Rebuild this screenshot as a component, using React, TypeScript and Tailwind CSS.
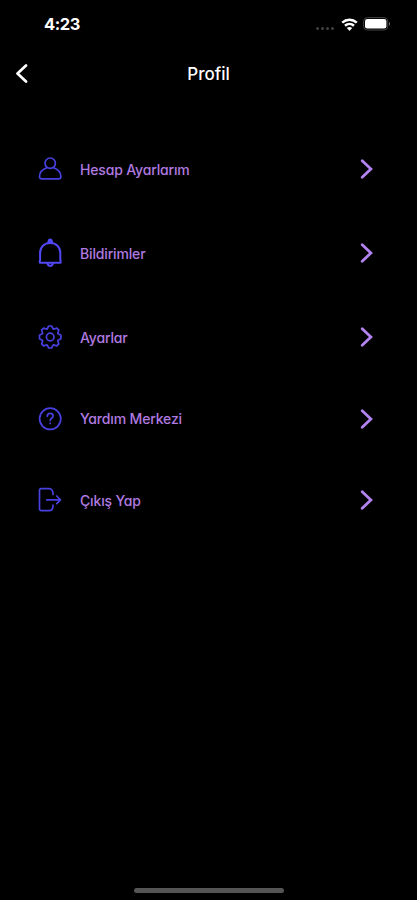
import type { ReactNode } from "react";

const stroke = { fill: "none", stroke: "currentColor", strokeWidth: 1.7, strokeLinecap: "round", strokeLinejoin: "round" } as const;

function Icon({ children }: { children: ReactNode }) {
  return (
    <svg width="24" height="32" viewBox="0 0 24 32" className="shrink-0 text-[#4840df]" {...stroke}>
      {children}
    </svg>
  );
}

const UserIcon = () => (
  <Icon>
    <circle cx="12.2" cy="10.2" r="5.2" />
    <path d="M8.8 14.8C4.6 16.4 1.5 19.7 1.5 23.5c0 1.7.8 2.4 2.5 2.4h16.4c1.7 0 2.5-.7 2.5-2.4 0-3.8-3.1-7.1-7.3-8.7" />
  </Icon>
);

const BellIcon = () => (
  <Icon>
    <g stroke="#5148f4" strokeWidth="2">
      <path d="M10.3 5.5c.2-1.2.2-3 1.9-3s1.7 1.8 1.9 3Z" fill="#5148f4" />
      <path d="M2.1 16C2.1 10 6.2 6 12.2 6s10.1 4 10.1 10v6.8l.4 2c.1.6-.2 1-.8 1H2.5c-.6 0-.9-.4-.8-1l.4-2Z" />
      <path d="M9.4 26.4c.5 1.6 1.4 2.5 2.8 2.5s2.3-.9 2.8-2.5" />
    </g>
  </Icon>
);

const GearIcon = () => (
  <Icon>
    <path d="m10.3 5.6.5-.6h2.8l1.7 3.2 3.5-1.1 2 2-1.1 3.5 3.2 1.7v3.4l-3.2 1.7 1.1 3.5-2 2-3.5-1.1-1.7 3.2h-2.8l-1.7-3.2-3.5 1.1-2-2 1.1-3.5-3.2-1.7v-3.4l3.2-1.7-1.1-3.5 2-2 3.5 1.1Z" />
    <circle cx="12.2" cy="16" r="3.8" />
  </Icon>
);

const HelpIcon = () => (
  <Icon>
    <circle cx="12.2" cy="15.8" r="10.6" />
    <path d="M9.3 13.2c0-1.7 1.2-2.8 2.9-2.8s2.9 1 2.9 2.6c0 2.2-2.9 2.3-2.9 4.5M12.2 20.2v.3" />
  </Icon>
);

const LogoutIcon = () => (
  <Icon>
    <path d="M15 10.4V9.6c0-3-1.4-4.9-4-4.9H3.1c-1 0-1.6.6-1.6 1.6v18.8c0 1 .6 1.6 1.6 1.6H11c2.6 0 4-1.9 4-4.9V21" />
    <path d="M8.7 15.8h13.8M18.7 12l3.8 3.8-3.8 3.8" />
  </Icon>
);

const items = [
  { label: "Hesap Ayarlarım", icon: UserIcon, height: "h-[84px]" },
  { label: "Bildirimler", icon: BellIcon, height: "h-[84px]" },
  { label: "Ayarlar", icon: GearIcon, height: "h-[84px]" },
  { label: "Yardım Merkezi", icon: HelpIcon, height: "h-[79px]" },
  { label: "Çıkış Yap", icon: LogoutIcon, height: "h-[84px]" },
];

function StatusBar() {
  return (
    <div className="flex h-12 items-center justify-between pl-[44px] pr-[26px]">
      <span className="text-[16.5px] font-bold leading-6 tracking-[-0.4px]">4:23</span>
      <div className="flex items-center">
        <div className="mr-[7px] mt-[9px] flex gap-[2px]">
          {[0, 1, 2, 3].map((n) => (
            <span key={n} className="h-[3px] w-[3px] rounded-full bg-[#404040]" />
          ))}
        </div>
        <svg width="17" height="13" viewBox="0 0 17 13" fill="none" stroke="white" strokeWidth="2.5" className="mr-[5px]">
          <path d="M1.2 4.6C5.4.8 11.6.8 15.8 4.6M4 7.8c2.6-2.3 6.4-2.3 9 0" />
          <path d="M8.5 13 5.8 10c1.6-1.3 3.8-1.3 5.4 0Z" fill="white" stroke="none" />
        </svg>
        <svg width="28" height="14" viewBox="0 0 28 14">
          <rect x=".6" y=".6" width="24.2" height="12.4" rx="3.8" fill="none" stroke="#444" />
          <rect x="2" y="2" width="21.4" height="9.6" rx="2.3" fill="white" />
          <path d="M26 5c1.4.5 1.4 3.2 0 3.7Z" fill="#777" />
        </svg>
      </div>
    </div>
  );
}

export default function App() {
  return (
    <div className="flex h-[900px] w-full flex-col bg-black font-['Inter',sans-serif] text-white">
      <StatusBar />
      <header className="grid h-[52px] grid-cols-[1fr_auto_1fr] items-center px-[15px]">
        <svg width="14" height="20" viewBox="0 0 14 20" fill="none" stroke="white" strokeWidth="2.7" strokeLinecap="round" strokeLinejoin="round">
          <path d="M11 1.5 2.5 9.5 11 17.5" />
        </svg>
        <h1 className="text-[17px] font-medium leading-6">Profil</h1>
      </header>
      <nav className="mt-[27px] flex flex-col pl-[38px] pr-[42px]">
        {items.map(({ label, icon: ItemIcon, height }) => (
          <button key={label} className={`flex items-center text-left ${height}`}>
            <ItemIcon />
            <span className="ml-[18px] flex-1 text-[14px] font-medium tracking-[-0.16px] text-[#b07ae0] [font-feature-settings:'cv11']">
              {label}
            </span>
            <svg width="16" height="22" viewBox="0 0 16 22" fill="none" stroke="#b383f0" strokeWidth="2.8" strokeLinecap="round">
              <path d="m3.2 2.7 8.7 8.3-8.7 8.3" />
            </svg>
          </button>
        ))}
      </nav>
      <div className="mb-[7px] mt-auto h-[5px] w-[150px] self-center rounded-full bg-[#555]" />
    </div>
  );
}
